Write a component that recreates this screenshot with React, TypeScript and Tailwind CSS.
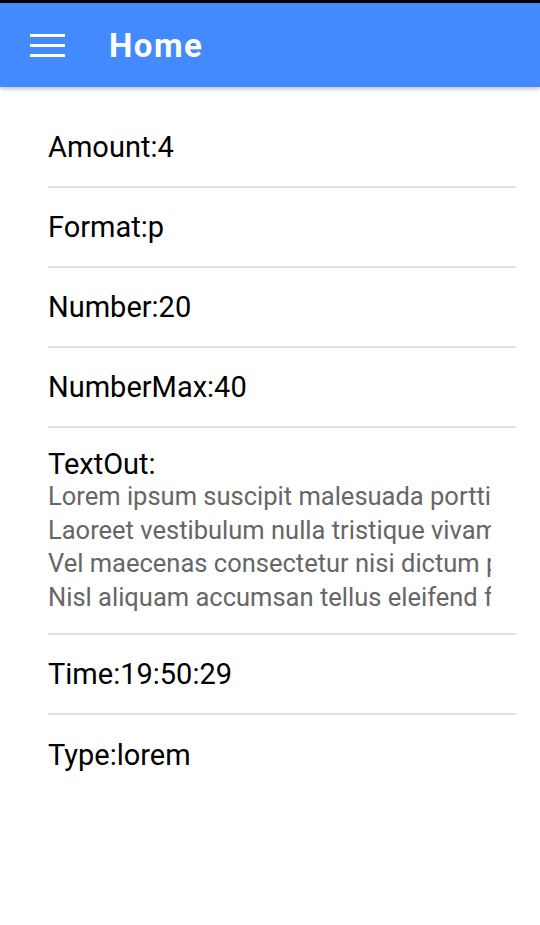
import React from "react";

const rows1 = ["Amount:4", "Format:p", "Number:20", "NumberMax:40"];
const rows2 = ["Time:19:50:29", "Type:lorem"];
const lorem = [
  "Lorem ipsum suscipit malesuada porttitor sed",
  "Laoreet vestibulum nulla tristique vivamus in",
  "Vel maecenas consectetur nisi dictum posuere",
  "Nisl aliquam accumsan tellus eleifend facilisi",
];

function Row({ text, last }: { text: string; last?: boolean }) {
  return (
    <div
      className={
        last
          ? "h-[80px] flex items-center text-[29px] text-black leading-[32px]"
          : "h-[80px] flex items-center border-b-2 border-[#e0e0e0] text-[29px] text-black leading-[32px]"
      }
    >
      {text}
    </div>
  );
}

export default function App() {
  return (
    <div className="w-[540px] h-[925px] bg-white overflow-hidden" style={{ fontFamily: "Roboto, 'Noto Sans', sans-serif" }}>
      <div className="h-[3px] bg-black" />
      <div className="h-[84px] bg-[#448aff] flex items-center shadow-[0_2px_4px_rgba(0,0,0,0.25)] relative">
        <div className="ml-[30px] w-[35px] flex flex-col gap-[7px]">
          <div className="h-[3px] bg-white" />
          <div className="h-[3px] bg-white" />
          <div className="h-[3px] bg-white" />
        </div>
        <div className="ml-[44px] text-white text-[33px] font-bold tracking-[1.5px] leading-none">Home</div>
      </div>
      <div className="pt-[21px] ml-[48px] w-[468px]">
        {rows1.map((r) => (
          <Row key={r} text={r} />
        ))}
        <div className="pt-[20px] pb-[19px] border-b-2 border-[#e0e0e0]">
          <div className="text-[29px] leading-[32px] text-black">TextOut:</div>
          <div className="w-[443px] overflow-hidden whitespace-nowrap text-[25.5px] leading-[33.5px] text-[#666666]">
            {lorem.map((l) => (
              <div key={l}>{l}</div>
            ))}
          </div>
        </div>
        {rows2.map((r, i) => (
          <Row key={r} text={r} last={i === rows2.length - 1} />
        ))}
      </div>
    </div>
  );
}
